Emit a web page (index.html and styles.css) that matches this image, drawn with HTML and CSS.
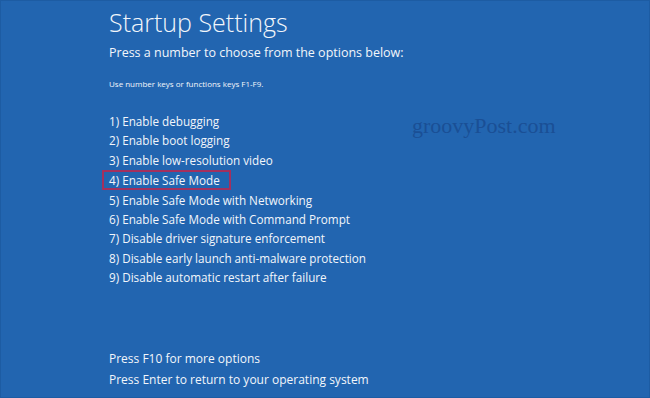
FILE: index.html
```html
<!DOCTYPE html>
<html lang="en">
<head>
    <meta charset="UTF-8">
    <title>Startup Settings</title>
    <link rel="stylesheet" href="styles.css">
</head>
<body>
    <div class="screen">
        <h1 class="title">Startup Settings</h1>
        <p class="lead">Press a number to choose from the options below:</p>
        <p class="hint">Use number keys or functions keys F1-F9.</p>

        <ul class="options">
            <li>1) Enable debugging</li>
            <li>2) Enable boot logging</li>
            <li>3) Enable low-resolution video</li>
            <li><span class="picked">4) Enable Safe Mode</span></li>
            <li>5) Enable Safe Mode with Networking</li>
            <li>6) Enable Safe Mode with Command Prompt</li>
            <li>7) Disable driver signature enforcement</li>
            <li>8) Disable early launch anti-malware protection</li>
            <li>9) Disable automatic restart after failure</li>
        </ul>

        <div class="footer">
            <p>Press F10 for more options</p>
            <p>Press Enter to return to your operating system</p>
        </div>

        <div class="watermark">groovyPost.com</div>
    </div>
</body>
</html>
```

FILE: styles.css
```css
body {
    margin: 0;
    background-color: #2265b0;
    font-family: "Open Sans", "Noto Sans", sans-serif;
    color: #f2f6fb;
}

.screen {
    position: relative;
    box-sizing: border-box;
    width: 650px;
    height: 398px;
    padding: 0 0 0 108px;
    border: 1px solid #1d5ca3;
    overflow: hidden;
}

.title {
    margin: 4px 0 0 0;
    font-size: 25px;
    font-weight: 300;
    line-height: 34px;
}

.lead {
    margin: 5px 0 0 0;
    font-size: 12.5px;
    line-height: 18px;
}

.hint {
    margin: 16px 0 0 0;
    font-size: 8px;
    line-height: 12px;
}

.options {
    list-style: none;
    margin: 22px 0 0 0;
    padding: 0;
    font-size: 11.7px;
    line-height: 19.4px;
}

.picked {
    display: inline-block;
    margin-left: -7px;
    padding: 0 9px 0 5px;
    line-height: 16px;
    border: 2px solid #a3305e;
}

.footer {
    margin-top: 60px;
    font-size: 12px;
    line-height: 21px;
}

.footer p {
    margin: 0;
}

.watermark {
    position: absolute;
    left: 411px;
    top: 112px;
    font-family: "Liberation Serif", serif;
    font-size: 22px;
    color: #1a4f95;
}
```
